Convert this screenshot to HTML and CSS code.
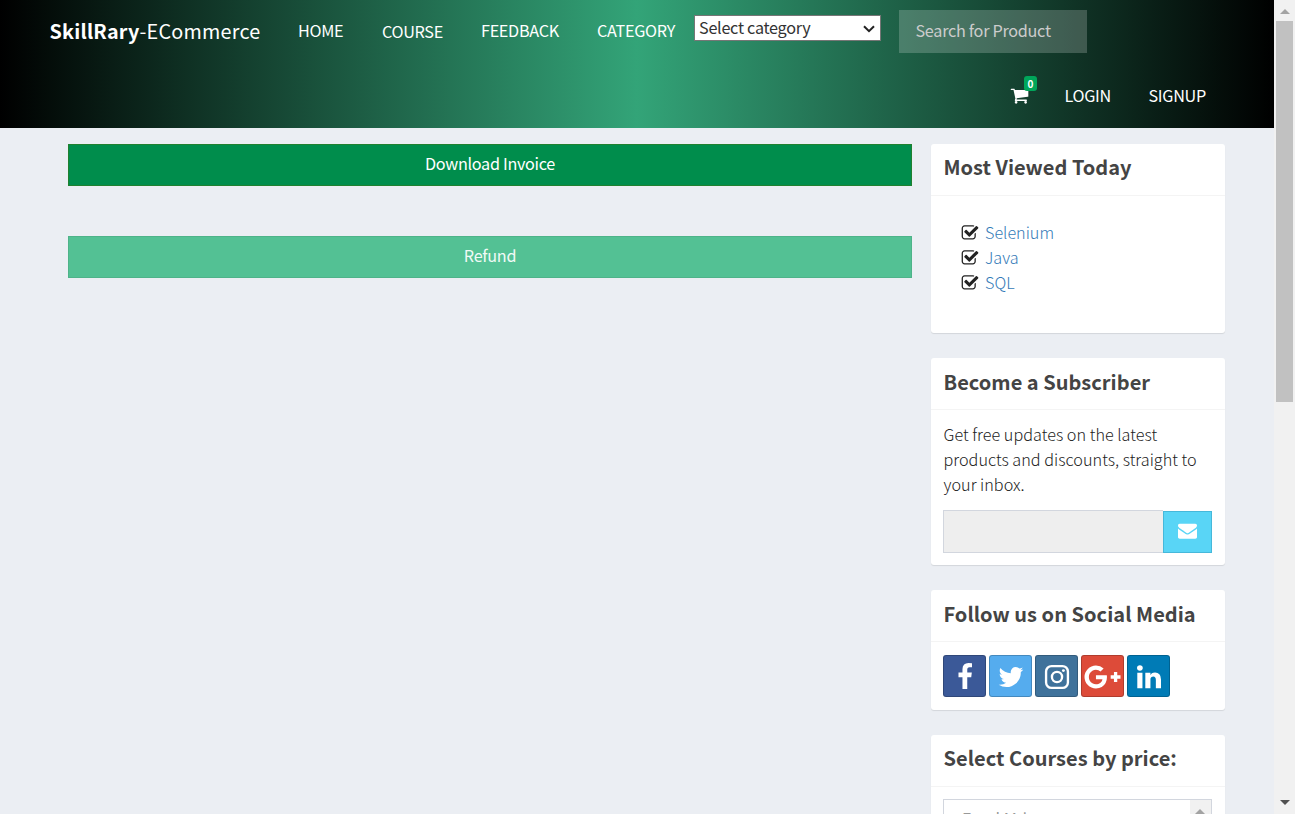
FILE: index.html
```
<!DOCTYPE html>
<html lang="en">
<head>
<meta charset="utf-8">
<title>SkillRary-ECommerce</title>
<link rel="stylesheet" href="styles.css">
</head>
<body>
<div class="window">
  <div class="page">
    <header class="header">
      <nav class="nav-main">
        <a class="brand"><b>SkillRary</b>-ECommerce</a>
        <a class="link">HOME</a>
        <a class="link link-low">COURSE</a>
        <a class="link">FEEDBACK</a>
        <a class="link">CATEGORY</a>
        <div class="select"><span>Select category</span>
          <svg class="chevron" viewBox="0 0 12 8"><path d="M1 1.2 6 6.2 11 1.2" fill="none" stroke="#222" stroke-width="2"/></svg>
        </div>
        <div class="search">Search for Product</div>
      </nav>
      <nav class="nav-user">
        <a class="cart">
          <svg viewBox="0 0 1792 1792"><path d="M704 1536q0 52-38 90t-90 38-90-38-38-90 38-90 90-38 90 38 38 90zm896 0q0 52-38 90t-90 38-90-38-38-90 38-90 90-38 90 38 38 90zm128-1088v512q0 24-16.500 42.500t-40.500 21.500l-1044 122q13 60 13 70 0 16-24 64h920q26 0 45 19t19 45-19 45-45 19h-1024q-26 0-45-19t-19-45q0-11 8-31.500t16-36 21.500-40 15.500-29.500l-177-823h-204q-26 0-45-19t-19-45 19-45 45-19h256q16 0 28.500 6.500t19.500 15.500 13 24.500 8 26 5.500 29.500 4.500 26h1201q26 0 45 19t19 45z"/></svg>
          <span class="badge">0</span>
        </a>
        <a class="link">LOGIN</a>
        <a class="link">SIGNUP</a>
      </nav>
    </header>
    <div class="content">
      <main class="main">
        <button class="btn btn-download">Download Invoice</button>
        <button class="btn btn-refund">Refund</button>
      </main>
      <aside class="sidebar">
        <section class="box box-viewed">
          <h3 class="box-title title-high">Most Viewed Today</h3>
          <ul class="trending">
            <li><svg viewBox="0 0 1792 1792"><use href="#check"/></svg><a>Selenium</a></li>
            <li><svg viewBox="0 0 1792 1792"><use href="#check"/></svg><a>Java</a></li>
            <li><svg viewBox="0 0 1792 1792"><use href="#check"/></svg><a>SQL</a></li>
          </ul>
        </section>
        <section class="box box-subscribe">
          <h3 class="box-title">Become a Subscriber</h3>
          <p class="blurb">Get free updates on the latest<br>products and discounts, straight to<br>your inbox.</p>
          <div class="subscribe">
            <div class="email"></div>
            <div class="send"><svg viewBox="0 0 1792 1792"><path d="M1792 710v794q0 66-47 113t-113 47h-1472q-66 0-113-47t-47-113v-794q44 49 101 87 362 246 497 345 57 42 92.500 65.500t94.500 48 110 24.500h2q51 0 110-24.500t94.500-48 92.500-65.500q170-123 498-345 57-39 100-87zm0-294q0 79-49 151t-122 123q-376 261-468 325-10 7-42.500 31t-54 38.500-52 32.500-57.500 27-50 9h-2q-23 0-50-9t-57.500-27-52-32.500-54-38.500-42.500-31q-91-64-262-182.500t-205-142.500q-62-42-117-115.500t-55-136.500q0-78 41.500-130t118.500-52h1472q65 0 112.500 47t47.500 113z"/></svg></div>
          </div>
        </section>
        <section class="box box-social">
          <h3 class="box-title">Follow us on Social Media</h3>
          <div class="social">
            <a class="tile facebook"><svg viewBox="0 0 1792 1792"><path d="M1343 12v264h-157q-86 0-116 36t-30 108v189h293l-39 296h-254v759h-306v-759h-255v-296h255v-218q0-186 104-288.500t277-102.500q147 0 228 12z"/></svg></a>
            <a class="tile twitter"><svg viewBox="0 0 1792 1792"><path d="M1684 408q-67 98-162 167 1 14 1 42 0 130-38 259.500t-115.500 248.500-184.500 210.500-258 146-323 54.500q-271 0-496-145 35 4 78 4 225 0 401-138-105-2-188-64.500t-114-159.500q33 5 61 5 43 0 85-11-112-23-185.500-111.500t-73.500-205.500v-4q68 38 146 41-66-44-105-115t-39-154q0-88 44-163 121 149 294.500 238.500t371.500 99.500q-8-38-8-74 0-134 94.500-228.500t228.500-94.500q140 0 236 102 109-21 205-78-37 115-142 178 93-10 186-50z"/></svg></a>
            <a class="tile instagram"><svg viewBox="0 0 1792 1792"><rect x="197" y="197" width="1398" height="1398" rx="350" fill="none" stroke="#fff" stroke-width="150"/><circle cx="896" cy="896" r="325" fill="none" stroke="#fff" stroke-width="150"/><circle cx="1306" cy="486" r="92"/></svg></a>
            <a class="tile google"><svg viewBox="0 0 2304 1792"><path d="M1437 913q0 208-87 370.500t-248 254-369 91.500q-149 0-285-58t-234-156-156-234-58-285 58-285 156-234 234-156 285-58q286 0 491 192l-199 191q-117-113-292-113-123 0-227.500 62t-165.500 168.500-61 232.500 61 232.500 165.500 168.500 227.500 62q83 0 152.500-23t114.500-57.500 78.500-78.500 49-83 21.500-74h-416v-252h692q12 63 12 122zm867-122v210h-209v209h-210v-209h-209v-210h209v-209h210v209h209z"/></svg></a>
            <a class="tile linkedin"><svg viewBox="0 0 1792 1792"><path d="M477 625v991h-330v-991h330zm21-306q1 73-50.500 122t-135.500 49h-2q-82 0-132-49t-50-122q0-74 51.500-122.500t134.500-48.500 133 48.500 51 122.500zm1166 729v568h-329v-530q0-105-40.500-164.500t-126.500-59.500q-63 0-105.500 34.500t-63.500 85.500q-11 30-11 81v553h-329q2-399 2-647t-1-296l-1-48h329v144h-2q20-32 41-56t56.500-52 87-43.500 114.500-15.500q171 0 275 113.500t104 332.500z"/></svg></a>
          </div>
        </section>
        <section class="box box-price">
          <h3 class="box-title title-high">Select Courses by price:</h3>
          <div class="listbox"><span class="option">Excel Md</span><div class="list-scroll"><i class="arrow arrow-up"></i></div></div>
        </section>
      </aside>
    </div>
  </div>
  <div class="scrollbar"><i class="arrow arrow-up"></i><div class="thumb"></div><i class="arrow arrow-down"></i></div>
</div>
<svg class="defs"><defs><path id="check" d="M1472 930v318q0 119-84.500 203.500t-203.500 84.500h-832q-119 0-203.500-84.500t-84.500-203.500v-832q0-119 84.500-203.500t203.500-84.500h832q63 0 117 25 15 7 18 23 3 17-9 29l-49 49q-10 10-23 10-3 0-9-2-23-6-45-6h-832q-66 0-113 47t-47 113v832q0 66 47 113t113 47h832q66 0 113-47t47-113v-254q0-13 9-22l64-64q10-10 23-10 6 0 12 3 20 8 20 29zm231-489l-814 814q-24 24-57 24t-57-24l-430-430q-24-24-24-57t24-57l110-110q24-24 57-24t57 24l263 263 647-647q24-24 57-24t57 24l110 110q24 24 24 57t-24 57z"/></defs></svg>
</body>
</html>
```
FILE: styles.css
```
* { box-sizing: border-box; }
body {
  margin: 0;
  height: 814px;
  overflow: hidden;
  font: 16.2px/25px "Noto Sans CJK SC", "Open Sans", sans-serif;
  color: #222;
}
svg { display: block; fill: currentColor; flex: none; }
.defs { display: none; }
.window { display: flex; width: 1295px; height: 814px; }
.page { width: 1274px; height: 814px; overflow: hidden; background: #ebeef3; }

.header {
  height: 128px;
  color: #fff;
  background: linear-gradient(to right, #000, #33a478 50%, #000);
}
.nav-main {
  display: grid;
  grid-template-columns: 248px 84px 99px 116px 97px 205px 188px;
  height: 65px;
  padding: 10px 0 0 50px;
  white-space: nowrap;
}
.brand { margin-left: -0.5px; font-size: 19.8px; line-height: 42px; letter-spacing: .22px; }
.link { line-height: 40px; letter-spacing: -.3px; white-space: nowrap; }
.link-low { padding-top: 1px; }
.select {
  display: flex;
  justify-content: space-between;
  align-items: center;
  width: 187px;
  height: 26px;
  margin-top: 5px;
  padding: 0 5px 0 4px;
  border: 1px solid #767676;
  background: #fff;
  color: #333;
  letter-spacing: -.27px;
}
.select span { margin-top: -2px; }
.chevron { width: 12px; height: 8px; margin-top: 1px; }
.search {
  height: 43px;
  padding-left: 16.5px;
  line-height: 41px;
  letter-spacing: -.28px;
  color: #ccc;
  background: rgba(255, 255, 255, .2);
}
.nav-user {
  display: grid;
  grid-template-columns: 54.5px 84px 80px;
  padding: 10px 0 0 1010px;
}
.cart { position: relative; }
.cart svg { width: 19px; height: 19px; margin-top: 11px; }
.badge {
  position: absolute;
  left: 14px;
  top: 1px;
  width: 13px;
  height: 15px;
  border-radius: 3px;
  background: #00a65a;
  font: bold 10px/15px "Noto Sans CJK SC", sans-serif;
  text-align: center;
}

.content { display: flex; padding: 16px 0 0 68px; }
.main { width: 844px; margin-right: 19px; }
.btn {
  display: block;
  width: 100%;
  height: 42px;
  margin: 0 0 50px;
  padding: 0 0 4px;
  border: 1px solid;
  background: #008d4c;
  color: #fff;
  font: inherit;
  letter-spacing: -.3px;
}
.btn-download { border-color: #20812f; }
.btn-refund { background: #53c194; border-color: #4eb389; color: #f0faf6; }

.sidebar { width: 294px; }
.box {
  margin-bottom: 25px;
  border-radius: 3px;
  background: #fff;
  box-shadow: 0 1px 1px rgba(0, 0, 0, .1);
}
.box-viewed { height: 189px; }
.box-subscribe { height: 207px; }
.box-social { height: 120px; }
.box-price { height: 160px; }
.box-title {
  height: 52px;
  margin: 0;
  padding-left: 12.5px;
  border-bottom: 1px solid #f4f4f4;
  color: #444;
  font-size: 20px;
  line-height: 48px;
  letter-spacing: .03px;
  white-space: nowrap;
}
.title-high { line-height: 46px; }
.trending { margin: 0; padding: 24px 0 0 31px; list-style: none; }
.trending li { display: flex; height: 25px; }
.trending svg { width: 18px; height: 18px; margin: 4px 6px 0 -1px; color: #222; }
.trending a { color: #337ab7; font-weight: 300; }
.blurb { margin: 0; padding: 12px 0 0 12.5px; font-weight: 300; letter-spacing: .02px; white-space: nowrap; }
.subscribe { display: flex; padding: 13px 13px 0 12px; }
.email { width: 220px; height: 43px; border: 1px solid #d2d6de; border-right: 0; background: #eee; }
.send {
  display: flex;
  justify-content: center;
  width: 49px;
  height: 42px;
  margin-top: 1px;
  padding-top: 9px;
  border: 1px solid #46b8da;
  background: #59d5f6;
  color: #fff;
}
.send svg { width: 19px; height: 19px; }
.social { display: flex; gap: 3px; padding: 13px 12px; }
.tile {
  display: flex;
  align-items: center;
  justify-content: center;
  width: 43px;
  height: 42px;
  padding: 2px 0 0;
  border: 1px solid rgba(0, 0, 0, .2);
  border-radius: 3px;
  color: #fff;
}
.tile svg { width: 28px; height: 28px; }
.facebook { background: #3b5998; }
.twitter { background: #55acee; }
.instagram { background: #3f729b; }
.google { background: #dd4b39; }
.google svg { width: 37px; }
.linkedin { background: #007bb6; }
.listbox {
  display: flex;
  justify-content: space-between;
  height: 90px;
  margin: 12px 13px 0 12px;
  border: 1px solid #d2d6de;
  color: #999;
}
.option { padding: 6px 0 0 18px; }
.list-scroll { width: 21px; padding: 9px 0 0 5px; background: #f1f1f1; }

.arrow { display: block; width: 0; height: 0; border: 5px solid transparent; }
.arrow-up { border-top: 0; border-bottom-color: #a3a3a3; }
.arrow-down { border-bottom: 0; border-top-color: #505050; }
.scrollbar {
  display: flex;
  flex-direction: column;
  align-items: center;
  width: 21px;
  padding: 9px 0 9px;
  background: #f1f1f1;
}
.thumb { width: 17px; height: 381px; margin: 7px 0 auto; background: #c1c1c1; }
```
